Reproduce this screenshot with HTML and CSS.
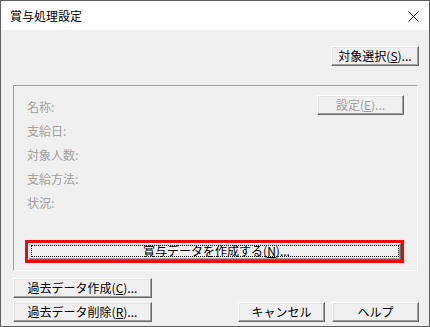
FILE: index.html
```html
<!DOCTYPE html>
<html lang="ja">
<head>
<meta charset="utf-8">
<title>賞与処理設定</title>
<link rel="stylesheet" href="styles.css">
</head>
<body>
<div class="window">
  <div class="titlebar">
    <span class="title">賞与処理設定</span>
    <svg class="close" width="11" height="11" viewBox="0 0 11 11"><path d="M0.5 0.5L10.5 10.5M10.5 0.5L0.5 10.5" stroke="#000" stroke-width="1" fill="none"/></svg>
  </div>
  <div class="client">
    <div class="toprow">
      <button class="btn w88">対象選択(<u>S</u>)...</button>
    </div>
    <div class="group">
      <div class="grouptop">
        <div class="labels">
          <div class="lbl">名称:</div>
          <div class="lbl">支給日:</div>
          <div class="lbl">対象人数:</div>
          <div class="lbl">支給方法:</div>
          <div class="lbl">状況:</div>
        </div>
        <button class="btn w87 disabled">設定(<u>E</u>)...</button>
      </div>
      <div class="bigwrap">
        <button class="btn big"><span class="focus">賞与データを作成する(<u>N</u>)...</span></button>
        <div class="mark"></div>
      </div>
    </div>
    <div class="bottom">
      <div class="leftcol">
        <button class="btn w139">過去データ作成(<u>C</u>)...</button>
        <button class="btn w139">過去データ削除(<u>R</u>)...</button>
      </div>
      <div class="rightbtns">
        <button class="btn w87">キャンセル</button>
        <button class="btn w87">ヘルプ</button>
      </div>
    </div>
  </div>
</div>
</body>
</html>
```

FILE: styles.css
```css
* { box-sizing: border-box; }
html, body { margin: 0; padding: 0; }
body {
  font-family: "Noto Sans CJK JP", "Noto Sans", sans-serif;
  font-size: 12px;
  color: #000;
  background: #f0f0f0;
}
.window {
  width: 430px;
  height: 327px;
  border: 1px solid #5f5f5f;
  display: flex;
  flex-direction: column;
  background: #f0f0f0;
}
.titlebar {
  height: 29px;
  background: #fff;
  display: flex;
  align-items: center;
  justify-content: space-between;
  padding: 0 10px 0 9px;
  flex: none;
}
.title { font-size: 12px; line-height: 14px; }
.close { display: block; margin-top: 2px; }
.client {
  flex: 1;
  display: flex;
  flex-direction: column;
  padding: 16px 10px 4px 12px;
}
.toprow {
  display: flex;
  justify-content: flex-end;
}
.btn {
  font-family: inherit;
  font-size: 12px;
  line-height: 14px;
  color: #000;
  background: #f0f0f0;
  border: 1px solid;
  border-color: #fff #696969 #696969 #fff;
  box-shadow: inset -1px -1px 0 #a0a0a0, inset 1px 1px 0 #e3e3e3;
  height: 20px;
  padding: 0 2px 1px;
  margin: 0;
  display: flex;
  align-items: center;
  justify-content: center;
  white-space: nowrap;
}
.btn u { text-decoration: underline; text-underline-offset: 1px; }
.w88 { width: 88px; }
.w87 { width: 87px; }
.w139 { width: 139px; }
.disabled { color: #a0a0a0; }
.group {
  margin-top: 19px;
  width: 405px;
  height: 186px;
  border: 1px solid;
  border-color: #a0a0a0 #fff #fff #a0a0a0;
  display: flex;
  flex-direction: column;
  padding: 9px 13px 0 13px;
}
.grouptop {
  display: flex;
  justify-content: space-between;
  align-items: flex-start;
}
.labels { display: flex; flex-direction: column; }
.lbl {
  height: 24px;
  line-height: 24px;
  color: #a0a0a0;
}
.bigwrap {
  position: relative;
  margin: 28px 0 0 1px;
  width: 373px;
  height: 17px;
}
.big {
  width: 373px;
  height: 17px;
  padding: 0;
  position: relative;
}
.focus {
  position: absolute;
  left: 2px; top: 1px; right: 1px; bottom: 2px;
  border: 1px dotted #000;
  display: flex;
  align-items: center;
  justify-content: center;
  padding-left: 3px;
}
.mark {
  position: absolute;
  left: -3px; top: -3px; right: -3px; bottom: -3px;
  border: 3px solid #ff0000;
  pointer-events: none;
}
.bottom {
  margin-top: 7px;
  display: flex;
  justify-content: space-between;
  align-items: flex-end;
}
.leftcol { display: flex; flex-direction: column; gap: 4px; }
.rightbtns { display: flex; gap: 7px; }
```
